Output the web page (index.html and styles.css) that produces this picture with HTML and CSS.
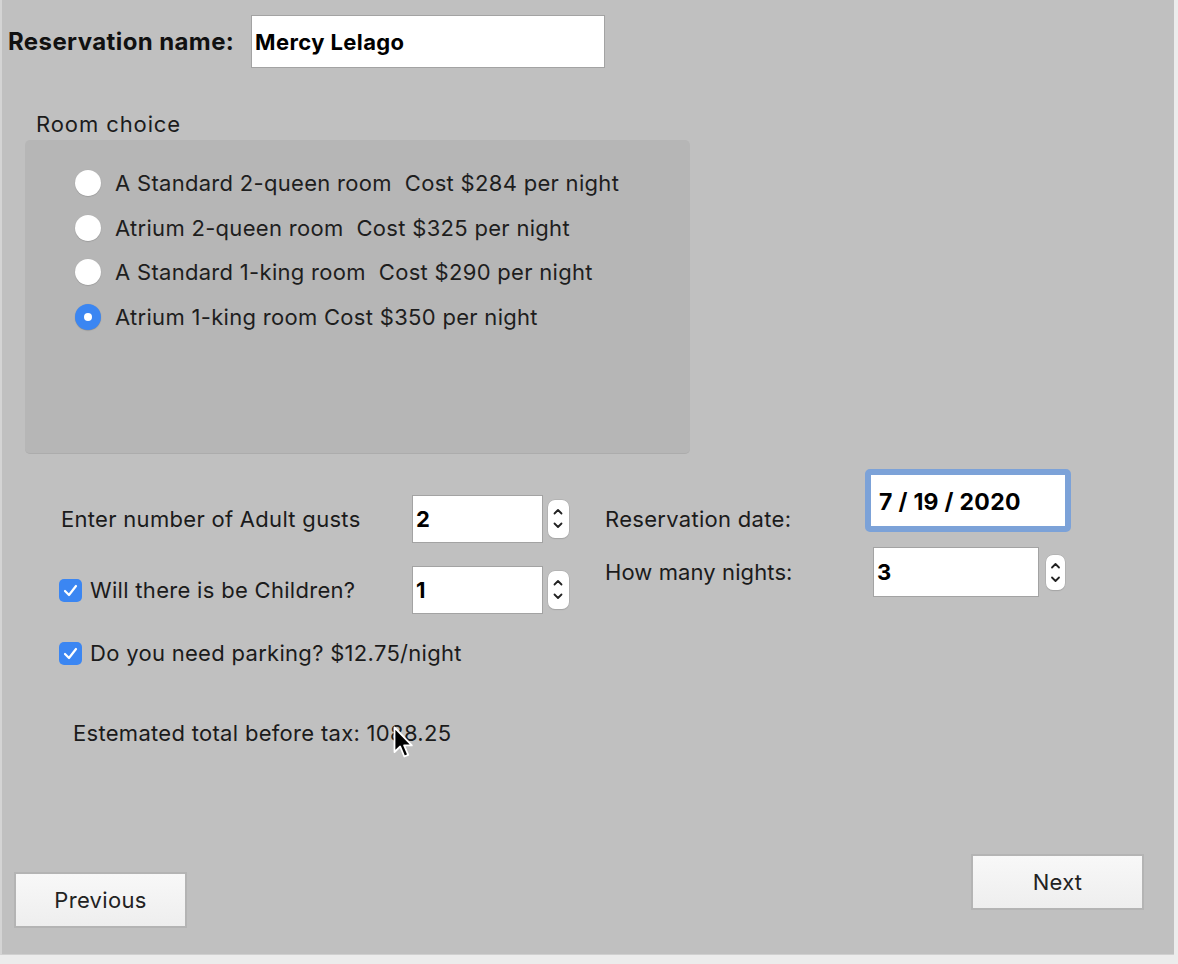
FILE: index.html
```html
<!DOCTYPE html>
<html>
<head>
<meta charset="utf-8">
<link rel="stylesheet" href="styles.css">
</head>
<body>
<div class="window">
  <div class="name-row">
    <span class="name-label">Reservation name:</span>
    <div class="field name-field">Mercy Lelago</div>
  </div>

  <div class="group-title">Room choice</div>
  <div class="group">
    <div class="radio-row"><span class="radio"></span><span>A Standard 2-queen room&nbsp; Cost $284 per night</span></div>
    <div class="radio-row"><span class="radio"></span><span>Atrium 2-queen room&nbsp; Cost $325 per night</span></div>
    <div class="radio-row"><span class="radio"></span><span>A Standard 1-king room&nbsp; Cost $290 per night</span></div>
    <div class="radio-row"><span class="radio on"></span><span>Atrium 1-king room Cost $350 per night</span></div>
  </div>

  <div class="middle">
    <div class="left-col">
      <div class="row">
        <span class="row-label adult">Enter number of Adult gusts</span>
        <div class="field num">2</div>
        <span class="stepper"><svg width="20" height="37" viewBox="0 0 20 37"><path d="M6.5 13.5 L10 10 L13.5 13.5" fill="none" stroke="#222" stroke-width="1.8" stroke-linecap="round" stroke-linejoin="round"/><path d="M6.5 23.5 L10 27 L13.5 23.5" fill="none" stroke="#222" stroke-width="1.8" stroke-linecap="round" stroke-linejoin="round"/></svg></span>
      </div>
      <div class="row">
        <span class="row-label check-label"><span class="check"><svg width="23" height="23" viewBox="0 0 23 23"><path d="M6 12 L10 16 L17 7" fill="none" stroke="#fff" stroke-width="2.2" stroke-linecap="round" stroke-linejoin="round"/></svg></span>Will there is be Children?</span>
        <div class="field num">1</div>
        <span class="stepper"><svg width="20" height="37" viewBox="0 0 20 37"><path d="M6.5 13.5 L10 10 L13.5 13.5" fill="none" stroke="#222" stroke-width="1.8" stroke-linecap="round" stroke-linejoin="round"/><path d="M6.5 23.5 L10 27 L13.5 23.5" fill="none" stroke="#222" stroke-width="1.8" stroke-linecap="round" stroke-linejoin="round"/></svg></span>
      </div>
      <div class="row parking">
        <span class="check-label"><span class="check"><svg width="23" height="23" viewBox="0 0 23 23"><path d="M6 12 L10 16 L17 7" fill="none" stroke="#fff" stroke-width="2.2" stroke-linecap="round" stroke-linejoin="round"/></svg></span>Do you need parking? $12.75/night</span>
      </div>
    </div>
    <div class="right-col">
      <div class="date-row">
        <span class="date-label">Reservation date:</span>
        <div class="date-ring"><div class="date-field">7 / 19 / 2020</div></div>
      </div>
      <div class="nights-row">
        <span class="nights-label">How many nights:</span>
        <div class="field nights">3</div>
        <span class="stepper small"><svg width="19" height="35" viewBox="0 0 19 35"><path d="M6 12.5 L9.5 9 L13 12.5" fill="none" stroke="#222" stroke-width="1.8" stroke-linecap="round" stroke-linejoin="round"/><path d="M6 22.5 L9.5 26 L13 22.5" fill="none" stroke="#222" stroke-width="1.8" stroke-linecap="round" stroke-linejoin="round"/></svg></span>
      </div>
    </div>
  </div>

  <div class="total">Estemated total before tax: 1088.25
    <svg class="cursor" width="24" height="36" viewBox="0 0 24 36"><path d="M1.5 1.5 L1.5 26 L7.2 20.5 L11.3 30.5 L15.2 28.8 L11.1 19.4 L18.8 19.4 Z" fill="#000" stroke="#fff" stroke-width="1.8" stroke-linejoin="round"/></svg>
  </div>

  <div class="footer">
    <button class="btn prev">Previous</button>
    <button class="btn next">Next</button>
  </div>
</div>
</body>
</html>
```

FILE: styles.css
```css
html, body {
  margin: 0;
  padding: 0;
  background: #ececec;
}
body {
  font-family: "Inter", "Noto Sans", sans-serif;
  color: #1b1b1b;
  width: 1178px;
  height: 964px;
  overflow: hidden;
  font-size: 22px;
  line-height: 26px;
  letter-spacing: 0.3px;
}
.window {
  box-sizing: border-box;
  width: 1174px;
  height: 955px;
  background: #c0c0c0;
  border-left: 2px solid #d4d4d4;
  border-bottom: 1px solid #d0d0d0;
  display: flex;
  flex-direction: column;
  position: relative;
}
.name-row {
  display: flex;
  align-items: center;
  margin-top: 15px;
  padding-left: 6px;
}
.name-label {
  font-weight: 700;
  font-size: 24px;
  letter-spacing: 0.4px;
  width: 243px;
  color: #111;
}
.field {
  box-sizing: border-box;
  background: #fff;
  border: 1px solid #a3a3a3;
  font-weight: 700;
  color: #000;
  display: flex;
  align-items: center;
}
.name-field {
  width: 354px;
  height: 53px;
  font-size: 22px;
  letter-spacing: 0.4px;
  padding-left: 3px;
}
.group-title {
  margin: 43px 0 0 34px;
  letter-spacing: 0.9px;
}
.group {
  box-sizing: border-box;
  margin: 3px 0 0 23px;
  width: 665px;
  height: 314px;
  background: #b6b6b6;
  border-radius: 5px;
  border-bottom: 1px solid #acacac;
  padding: 30px 0 0 50px;
  display: flex;
  flex-direction: column;
  gap: 18.5px;
}
.radio-row {
  display: flex;
  align-items: center;
  gap: 14px;
  height: 26px;
  color: #1e1e1e;
}
.radio {
  box-sizing: border-box;
  width: 26px;
  height: 26px;
  border-radius: 50%;
  background: #fff;
  box-shadow: 0 0.5px 1px rgba(0,0,0,0.25);
  flex: none;
}
.radio.on {
  background: #3b86f2;
  position: relative;
}
.radio.on::after {
  content: "";
  position: absolute;
  left: 9px;
  top: 9px;
  width: 8px;
  height: 8px;
  border-radius: 50%;
  background: #fff;
}
.middle {
  display: flex;
  margin-top: 15px;
}
.left-col {
  width: 546px;
  padding-left: 57px;
  padding-top: 26px;
  display: flex;
  flex-direction: column;
  gap: 23px;
  flex: none;
}
.row {
  display: flex;
  align-items: center;
}
.row-label {
  width: 353px;
  flex: none;
}
.adult {
  padding-left: 2px;
  box-sizing: border-box;
}
.check-label {
  display: flex;
  align-items: center;
  gap: 8px;
  white-space: nowrap;
}
.check {
  width: 23px;
  height: 23px;
  border-radius: 5px;
  background: #3b86f2;
  display: inline-flex;
  flex: none;
}
.num {
  width: 131px;
  height: 48px;
  font-size: 22px;
  padding-left: 3px;
}
.stepper {
  display: inline-flex;
  box-sizing: border-box;
  width: 21px;
  height: 38px;
  margin-left: 5px;
  background: #fff;
  border-radius: 7px;
  box-shadow: 0 0 0 0.5px #a8a8a8, 0 1px 1px rgba(0,0,0,0.15);
}
.stepper.small {
  width: 19px;
  height: 35px;
  margin-left: 7px;
}
.parking {
  margin-top: 3px;
  height: 26px;
}
.right-col {
  display: flex;
  flex-direction: column;
  gap: 15px;
}
.date-row {
  display: flex;
  align-items: flex-start;
}
.date-label {
  width: 260px;
  margin-top: 37px;
}
.date-ring {
  box-sizing: border-box;
  width: 206px;
  height: 63px;
  border: 6px solid #7ca2d8;
  border-radius: 5px;
  background: #fff;
}
.date-field {
  font-size: 23px;
  font-weight: 700;
  padding: 14px 0 0 8px;
  color: #000;
  line-height: 26px;
}
.nights-row {
  display: flex;
  align-items: center;
}
.nights-label {
  width: 268px;
  letter-spacing: 0.1px;
}
.nights {
  width: 166px;
  height: 50px;
  font-size: 22px;
  padding-left: 3px;
}
.total {
  margin: 54px 0 0 71px;
  position: relative;
  width: 420px;
}
.cursor {
  position: absolute;
  left: 320px;
  top: 6px;
}
.footer {
  margin-top: auto;
  display: flex;
  justify-content: space-between;
  align-items: flex-start;
  padding: 0 30px 26px 12px;
}
.btn {
  font-family: "Inter", "Liberation Sans", sans-serif;
  width: 173px;
  height: 56px;
  font-size: 22px;
  letter-spacing: 0.3px;
  color: #222;
  background: linear-gradient(#f8f8f8, #eeeeee);
  border: 2px solid #b4b4b4;
  border-radius: 0;
  padding: 0;
}
.prev {
  margin-top: 18px;
}
```
